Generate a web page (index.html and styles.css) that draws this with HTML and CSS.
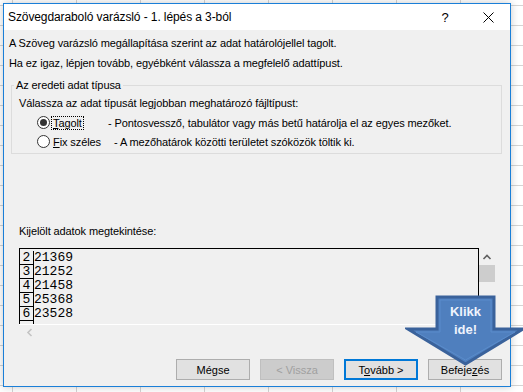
FILE: index.html
```html
<!DOCTYPE html>
<html lang="hu">
<head>
<meta charset="UTF-8">
<title>Szövegdaraboló varázsló</title>
<link rel="stylesheet" href="styles.css">
</head>
<body>
<div class="dialog">
  <div class="titlebar">
    <span class="title">Szövegdaraboló varázsló - 1. lépés a 3-ból</span>
    <span class="title-btn help">?</span>
    <span class="title-btn close">
      <svg width="11" height="11" viewBox="0 0 11 11"><path d="M0.5 0.5 L10.5 10.5 M10.5 0.5 L0.5 10.5" stroke="#000" stroke-width="1"/></svg>
    </span>
  </div>
  <div class="content">
    <p class="line">A Szöveg varázsló megállapítása szerint az adat határolójellel tagolt.</p>
    <p class="line">Ha ez igaz, lépjen tovább, egyébként válassza a megfelelő adattípust.</p>
    <fieldset class="group">
      <legend>Az eredeti adat típusa</legend>
      <p class="group-text">Válassza az adat típusát legjobban meghatározó fájltípust:</p>
      <div class="option">
        <span class="radio checked"></span>
        <span class="opt-label"><span class="focus"><u>T</u>agolt</span></span>
        <span class="opt-desc">- Pontosvessző, tabulátor vagy más betű határolja el az egyes mezőket.</span>
      </div>
      <div class="option">
        <span class="radio"></span>
        <span class="opt-label wide"><span class="plain"><u>F</u>ix széles</span></span>
        <span class="opt-desc">- A mezőhatárok közötti területet szóközök töltik ki.</span>
      </div>
    </fieldset>
    <p class="preview-label">Kijelölt adatok megtekintése:</p>
    <div class="preview">
      <div class="preview-main">
        <div class="rows">
          <div class="row"><span class="num">2</span><span class="val">21369</span></div>
          <div class="row"><span class="num">3</span><span class="val">21252</span></div>
          <div class="row"><span class="num">4</span><span class="val">21458</span></div>
          <div class="row"><span class="num">5</span><span class="val">25368</span></div>
          <div class="row"><span class="num">6</span><span class="val">23528</span></div>
          <div class="row"><span class="num empty"></span></div>
        </div>
        <div class="vscroll">
          <svg class="chev" width="16" height="14" viewBox="0 0 16 14"><path d="M4.5 9 L8 5.5 L11.5 9" fill="none" stroke="#606060" stroke-width="1.6"/></svg>
          <span class="thumb"></span>
        </div>
      </div>
      <div class="hscroll">
        <svg width="16" height="15" viewBox="0 0 16 15"><path d="M9.5 4 L6 7.5 L9.5 11" fill="none" stroke="#c4c4c4" stroke-width="1.6"/></svg>
      </div>
    </div>
    <div class="buttons">
      <button class="btn">Mégse</button>
      <button class="btn disabled">&lt; Vissza</button>
      <button class="btn default">T<u>o</u>vább &gt;</button>
      <button class="btn">Befeje<u>z</u>és</button>
    </div>
  </div>
</div>

<div class="callout">
  <svg width="120" height="74" viewBox="0 0 120 74">
    <polygon points="32,3 89,3 89,35 118,35 60.5,70 3,35 32,35" fill="#4f7fbe" stroke="#3a629b" stroke-width="3" stroke-linejoin="miter"/>
    <polygon points="35,6 86,6 86,38 110,38 60.5,66 11,38 35,38" fill="none" stroke="#5a8ccb" stroke-width="1"/>
    <text x="60.5" y="22" class="callout-text">Klikk</text>
    <text x="60.5" y="40" class="callout-text">ide!</text>
  </svg>
</div>
</body>
</html>
```

FILE: styles.css
```css
body {
  margin: 0;
  width: 523px;
  height: 392px;
  overflow: hidden;
  position: relative;
  font-family: 'Liberation Sans', Arial, sans-serif;
  font-size: 11px;
  color: #000;
  background-color: #ffffff;
  background-image: linear-gradient(#d4d4d4 1px, transparent 1px),
                    linear-gradient(90deg, #d4d4d4 1px, transparent 1px);
  background-size: 64px 20px;
  background-position: 12px 5px;
}
p {
  margin: 0;
}
.dialog {
  margin: 3px 0 0 3px;
  width: 506px;
  height: 382px;
  border: 1px solid #1a7fd8;
  background-color: #f0f0f0;
  box-shadow: 0 0 8px rgba(0,0,0,0.22);
  display: flex;
  flex-direction: column;
}
.titlebar {
  height: 26px;
  background-color: #ffffff;
  display: flex;
  align-items: center;
}
.title {
  flex: 1;
  padding-left: 4px;
  font-size: 12px;
  letter-spacing: -0.1px;
}
.title-btn {
  display: flex;
  justify-content: center;
  align-items: center;
}
.help {
  width: 20px;
  margin-right: 27px;
  font-size: 13px;
}
.close {
  width: 12px;
  margin-right: 16px;
}
.content {
  flex: 1;
  display: flex;
  flex-direction: column;
  letter-spacing: -0.1px;
}
.line {
  margin-left: 5px;
  line-height: 20px;
}
.line:first-child {
  margin-top: 3px;
}
.group {
  margin: 5px 0 0 7px;
  border: 1px solid #dcdcdc;
  padding: 2px 7px 2px 7px;
  box-sizing: border-box;
  width: 491px;
}
.group legend {
  padding: 0 2px;
  margin-left: -5px;
  line-height: 14px;
}
.group-text {
  line-height: 19px;
}
.option {
  display: flex;
  align-items: center;
  height: 19px;
}
.radio {
  width: 11px;
  height: 11px;
  border: 1px solid #333;
  border-radius: 50%;
  background-color: #fff;
  margin-left: 18px;
  display: flex;
  justify-content: center;
  align-items: center;
}
.radio.checked::after {
  content: '';
  width: 7px;
  height: 7px;
  border-radius: 50%;
  background-color: #333;
}
.opt-label {
  width: 57px;
  padding-left: 1px;
}
.opt-label.wide {
  width: 61px;
  padding-left: 3px;
}
.focus {
  border: 1px dotted #000;
  padding: 0 1px;
}
.preview-label {
  margin: 69px 0 0 15px;
  line-height: 16px;
}
.preview {
  margin: 9px 0 0 15px;
  width: 476px;
}
.preview-main {
  display: flex;
  height: 76px;
}
.rows {
  flex: 1;
  border: 1px solid #000;
  border-bottom: none;
  padding-top: 2px;
  overflow: hidden;
  font-family: 'Liberation Mono', 'Courier New', monospace;
  font-size: 13px;
  line-height: 13px;
  letter-spacing: 0;
}
.row {
  display: flex;
}
.num {
  width: 13px;
  border-right: 1px solid #000;
  border-bottom: 1px solid #000;
  text-align: center;
}
.num.empty {
  height: 13px;
}
.vscroll {
  width: 16px;
  display: flex;
  flex-direction: column;
  align-items: center;
}
.chev {
  margin-top: 2px;
}
.thumb {
  width: 16px;
  height: 17px;
  margin-top: 1px;
  background-color: #cdcdcd;
}
.hscroll {
  height: 16px;
  border-top: 1px solid #ffffff;
  padding-left: 3px;
}
.buttons {
  margin: auto 8px 6px 0;
  display: flex;
  justify-content: flex-end;
  gap: 10px;
}
.btn {
  width: 74px;
  height: 21px;
  padding: 0;
  font-family: 'Liberation Sans', Arial, sans-serif;
  font-size: 11px;
  color: #000;
  background-color: #e1e1e1;
  border: 1px solid #adadad;
}
.btn.disabled {
  color: #a0a0a0;
  background-color: #cccccc;
  border-color: #bfbfbf;
}
.btn.default {
  border: 2px solid #0078d7;
}
.callout {
  position: absolute;
  left: 405px;
  top: 294px;
  width: 120px;
  height: 74px;
}
.callout-text {
  font-family: 'Liberation Sans', Arial, sans-serif;
  font-weight: bold;
  font-size: 13px;
  fill: #eef3fc;
  text-anchor: middle;
}
```
